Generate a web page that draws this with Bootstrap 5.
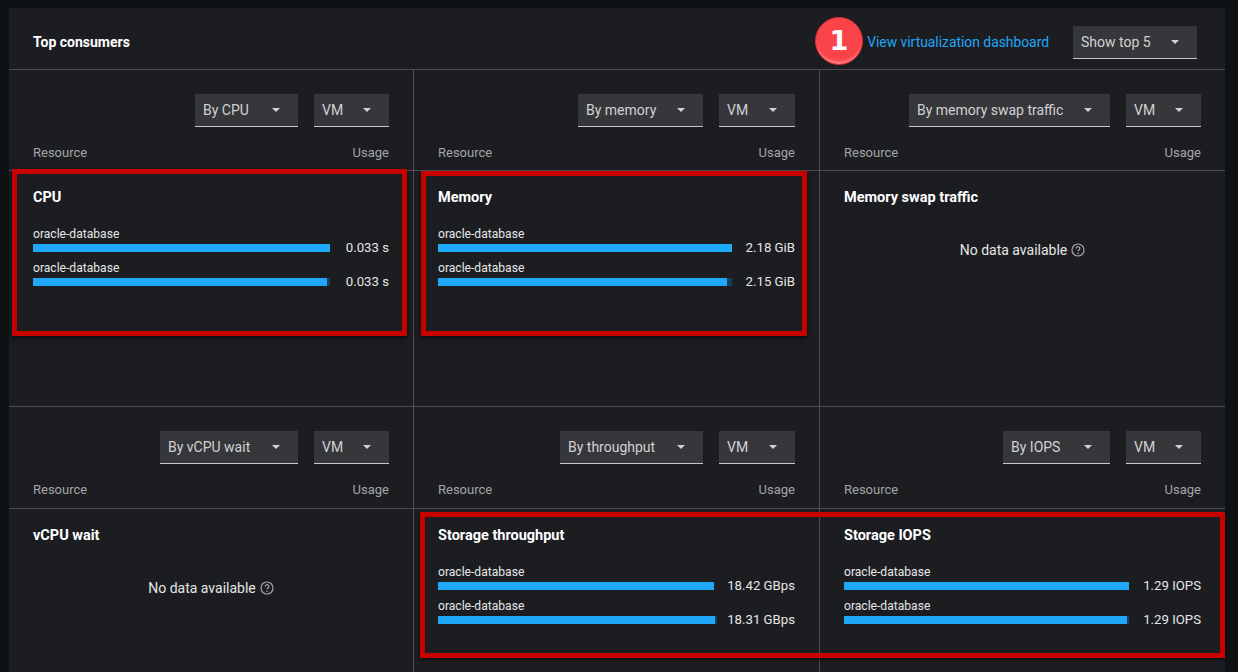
<!DOCTYPE html>
<html lang="en">
<head>
<meta charset="utf-8">
<title>Top consumers</title>
<link href="https://cdn.jsdelivr.net/npm/bootstrap@5.3.0/dist/css/bootstrap.min.css" rel="stylesheet">
<style>
html,body{height:672px;overflow:hidden}
body{background:#0f1214;font-family:Roboto,"Noto Sans",sans-serif;font-size:14px;color:#e0e0e0;padding:8px 13px 0 9px;position:relative}
.panel{background:#1b1d21;height:664px;overflow:hidden}
.panel-head{height:62px;border-bottom:1px solid #4d4d4f;padding:8px 28px 0 24px}
.panel-title{font-size:14px;font-weight:700;color:#fff;margin:0}
.dash-link{font-size:13.85px;color:#1fa7f8;text-decoration:none}
.sel{display:inline-flex;align-items:center;justify-content:space-between;height:33px;background:#36373b;border-bottom:1px solid #c7c7c7;color:#d2d2d2;font-size:14px;padding:0 8px}
.sel::after{content:"";border-left:4px solid transparent;border-right:4px solid transparent;border-top:4px solid #d2d2d2;margin-left:16px;margin-right:10px}
.cells{display:grid;grid-template-columns:405px 406px 405px;grid-template-rows:337px 1fr;height:602px}
.cell{border-right:1px solid #4d4d4f;border-bottom:1px solid #4d4d4f;padding:0}
.cell:nth-child(3n){border-right:0}
.cell:nth-child(n+4){border-bottom:0}
.tools{height:74px;padding:24px 24px 0 0}
.cols{height:27px;padding:0 24px;border-bottom:1px solid #4d4d4f;font-size:13px;line-height:17px;color:#a5a5a7;box-sizing:content-box}
.cell:nth-child(-n+3) .cols{height:26px}
.body-area{padding:16px 24px 0}
.metric{font-size:14.5px;font-weight:700;color:#fff;height:24px;line-height:22px}
.metric-list{margin-top:15px}
.item{height:34px}
.item-name{font-size:12.1px;line-height:16px;color:#e6e6e6}
.bar-row{height:18px;margin-top:-3px}
.track{flex:1 1 auto;height:8px;background:#17405f}
.fill{height:8px;background:#1fa7f8}
.val{font-size:13.2px;color:#e6e6e6;line-height:18px;white-space:nowrap;text-align:right}
.w1{width:59px}.w2{width:63px}.w3{width:81px}.w3b{width:78px}.w4{width:72px}
.empty{font-size:14px;color:#e6e6e6;margin-top:27px;height:24px}
.hl{position:absolute;border:5px solid #c90000;box-shadow:0 2px 4px rgba(0,0,0,.55);pointer-events:none}
.hl-a{left:12px;top:169px;width:395px;height:167px}
.hl-b{left:421px;top:171px;width:386px;height:165px}
.hl-c{left:420px;top:512px;width:805px;height:146px}
.step{position:absolute;left:815px;top:17px;width:48px;height:48px;border-radius:50%;background:#fb4449;border:1px solid #d92f36;color:#fff;font-size:27px;font-weight:700;font-family:"DejaVu Sans",sans-serif;line-height:46px;text-align:center;box-shadow:inset 0 -4px 3px -2px #ff8b8e}
</style>
</head>
<body>
<div class="panel">
  <div class="panel-head d-flex align-items-center">
    <h2 class="panel-title me-auto">Top consumers</h2>
    <a class="dash-link" href="#">View virtualization dashboard</a>
    <span class="sel" style="width:124px;margin-left:24px">Show top 5</span>
  </div>
  <div class="cells">

    <div class="cell">
      <div class="tools d-flex justify-content-end gap-3"><span class="sel" style="width:103px">By CPU</span><span class="sel" style="width:75px">VM</span></div>
      <div class="cols d-flex justify-content-between"><span>Resource</span><span>Usage</span></div>
      <div class="body-area">
        <div class="metric">CPU</div>
        <div class="metric-list">
          <div class="item"><div class="item-name">oracle-database</div><div class="bar-row d-flex align-items-center"><div class="track"><div class="fill" style="width:100%"></div></div><div class="val w1">0.033 s</div></div></div>
          <div class="item"><div class="item-name">oracle-database</div><div class="bar-row d-flex align-items-center"><div class="track"><div class="fill" style="width:99%"></div></div><div class="val w1">0.033 s</div></div></div>
        </div>
      </div>
    </div>

    <div class="cell">
      <div class="tools d-flex justify-content-end gap-3"><span class="sel" style="width:125px">By memory</span><span class="sel" style="width:76px">VM</span></div>
      <div class="cols d-flex justify-content-between"><span>Resource</span><span>Usage</span></div>
      <div class="body-area">
        <div class="metric">Memory</div>
        <div class="metric-list">
          <div class="item"><div class="item-name">oracle-database</div><div class="bar-row d-flex align-items-center"><div class="track"><div class="fill" style="width:100%"></div></div><div class="val w2">2.18 GiB</div></div></div>
          <div class="item"><div class="item-name">oracle-database</div><div class="bar-row d-flex align-items-center"><div class="track"><div class="fill" style="width:98.3%"></div></div><div class="val w2">2.15 GiB</div></div></div>
        </div>
      </div>
    </div>

    <div class="cell">
      <div class="tools d-flex justify-content-end gap-3"><span class="sel" style="width:201px">By memory swap traffic</span><span class="sel" style="width:75px">VM</span></div>
      <div class="cols d-flex justify-content-between"><span>Resource</span><span>Usage</span></div>
      <div class="body-area">
        <div class="metric">Memory swap traffic</div>
        <div class="empty d-flex justify-content-center align-items-center gap-1">No data available
          <svg width="14" height="14" viewBox="0 0 14 14" fill="none" aria-hidden="true"><circle cx="7" cy="7" r="6" stroke="#a5a5a7" stroke-width="1.2"/><path d="M5.2 5.5a1.8 1.8 0 1 1 2.7 1.6c-.6.3-.9.6-.9 1.2" stroke="#a5a5a7" stroke-width="1.2"/><circle cx="7" cy="10.2" r=".8" fill="#a5a5a7"/></svg>
        </div>
      </div>
    </div>

    <div class="cell">
      <div class="tools d-flex justify-content-end gap-3"><span class="sel" style="width:138px">By vCPU wait</span><span class="sel" style="width:75px">VM</span></div>
      <div class="cols d-flex justify-content-between"><span>Resource</span><span>Usage</span></div>
      <div class="body-area">
        <div class="metric">vCPU wait</div>
        <div class="empty d-flex justify-content-center align-items-center gap-1">No data available
          <svg width="14" height="14" viewBox="0 0 14 14" fill="none" aria-hidden="true"><circle cx="7" cy="7" r="6" stroke="#a5a5a7" stroke-width="1.2"/><path d="M5.2 5.5a1.8 1.8 0 1 1 2.7 1.6c-.6.3-.9.6-.9 1.2" stroke="#a5a5a7" stroke-width="1.2"/><circle cx="7" cy="10.2" r=".8" fill="#a5a5a7"/></svg>
        </div>
      </div>
    </div>

    <div class="cell">
      <div class="tools d-flex justify-content-end gap-3"><span class="sel" style="width:143px">By throughput</span><span class="sel" style="width:76px">VM</span></div>
      <div class="cols d-flex justify-content-between"><span>Resource</span><span>Usage</span></div>
      <div class="body-area">
        <div class="metric">Storage throughput</div>
        <div class="metric-list">
          <div class="item"><div class="item-name">oracle-database</div><div class="bar-row d-flex align-items-center"><div class="track"><div class="fill" style="width:100%"></div></div><div class="val w3">18.42 GBps</div></div></div>
          <div class="item"><div class="item-name">oracle-database</div><div class="bar-row d-flex align-items-center"><div class="track"><div class="fill" style="width:99.4%"></div></div><div class="val w3b">18.31 GBps</div></div></div>
        </div>
      </div>
    </div>

    <div class="cell">
      <div class="tools d-flex justify-content-end gap-3"><span class="sel" style="width:107px">By IOPS</span><span class="sel" style="width:75px">VM</span></div>
      <div class="cols d-flex justify-content-between"><span>Resource</span><span>Usage</span></div>
      <div class="body-area">
        <div class="metric">Storage IOPS</div>
        <div class="metric-list">
          <div class="item"><div class="item-name">oracle-database</div><div class="bar-row d-flex align-items-center"><div class="track"><div class="fill" style="width:100%"></div></div><div class="val w4">1.29 IOPS</div></div></div>
          <div class="item"><div class="item-name">oracle-database</div><div class="bar-row d-flex align-items-center"><div class="track"><div class="fill" style="width:99.4%"></div></div><div class="val w4">1.29 IOPS</div></div></div>
        </div>
      </div>
    </div>

  </div>
</div>
<div class="hl hl-a"></div>
<div class="hl hl-b"></div>
<div class="hl hl-c"></div>
<div class="step">1</div>
<script src="https://cdn.jsdelivr.net/npm/bootstrap@5.3.0/dist/js/bootstrap.bundle.min.js"></script>
</body>
</html>
